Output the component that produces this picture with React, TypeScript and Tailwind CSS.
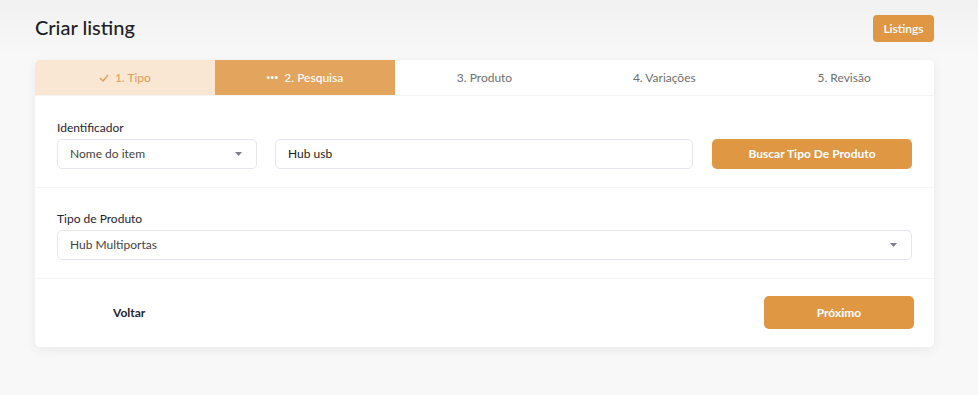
import React from "react";

const steps = [
  { label: "1. Tipo", state: "done" },
  { label: "2. Pesquisa", state: "active" },
  { label: "3. Produto", state: "todo" },
  { label: "4. Variações", state: "todo" },
  { label: "5. Revisão", state: "todo" },
];

const Caret = () => (
  <svg width="7" height="4" viewBox="0 0 7 4" className="shrink-0">
    <path d="M0 0h7L3.5 4z" fill="#7b7f88" />
  </svg>
);

const App: React.FC = () => {
  return (
    <div
      className="min-h-[395px] w-full bg-[linear-gradient(to_bottom,#f1f1f1,#f8f8f8_60px)] pt-[15px] pr-[44px] pl-[35px] text-[#1f2430]"
      style={{ fontFamily: "Lato, 'Noto Sans', sans-serif" }}
    >
      {/* Header */}
      <div className="flex items-start justify-between">
        <h1 className="mt-[-1px] text-[20px] leading-[26px] font-medium text-[#1b1f2a]">Criar listing</h1>
        <button className="h-[27px] w-[61px] rounded-[4px] bg-[#e09744] text-[12px] font-semibold text-white">
          Listings
        </button>
      </div>

      {/* Card */}
      <div className="mt-[18px] overflow-hidden rounded-[5px] bg-white shadow-[0_3px_12px_rgba(0,0,0,0.06)]">
        {/* Steps */}
        <div className="grid h-[36px] grid-cols-5 border-b border-[#f4f4f4] text-[12px]">
          {steps.map((s) => (
            <div
              key={s.label}
              className={
                s.state === "done"
                  ? "flex items-center justify-center gap-[6px] bg-[#f9e6d3] text-[#e29c55]"
                  : s.state === "active"
                    ? "flex items-center justify-center gap-[6px] bg-[#e3a55d] font-medium text-white"
                    : "flex items-center justify-center text-[#6f6f6f]"
              }
            >
              {s.state === "done" && (
                <svg width="10" height="8" viewBox="0 0 10 8">
                  <path d="M1 4l3 3 5-6" fill="none" stroke="#e29c55" strokeWidth="1.3" />
                </svg>
              )}
              {s.state === "active" && <span className="text-[7px] tracking-[0px]">•••</span>}
              <span>{s.label}</span>
            </div>
          ))}
        </div>

        {/* Identificador */}
        <div className="border-b border-[#f6f6f6] px-[22px] pt-[24px] pb-[18px]">
          <div className="mb-[3px] text-[12px] leading-[16px] text-[#1f2430]">Identificador</div>
          <div className="flex items-center gap-[18px]">
            <div className="flex h-[30px] w-[200px] items-center justify-between rounded-[5px] border border-[#e3e6ef] pr-[14px] pl-[12px] text-[12px] text-[#444]">
              <span>Nome do item</span>
              <Caret />
            </div>
            <div className="flex h-[30px] flex-1 items-center rounded-[5px] border border-[#e3e6ef] px-[12px] text-[12px] text-[#222]">
              Hub usb
            </div>
            <button className="ml-[1px] h-[30px] w-[200px] rounded-[5px] bg-[#e09744] text-[12px] font-bold text-white">
              Buscar Tipo De Produto
            </button>
          </div>
        </div>

        {/* Tipo de Produto */}
        <div className="border-b border-[#f6f6f6] px-[22px] pt-[23px] pb-[18px]">
          <div className="mb-[3px] text-[12px] leading-[16px] text-[#1f2430]">Tipo de Produto</div>
          <div className="flex h-[30px] items-center justify-between rounded-[5px] border border-[#e3e6ef] pr-[14px] pl-[12px] text-[12px] text-[#444]">
            <span>Hub Multiportas</span>
            <Caret />
          </div>
        </div>

        {/* Footer */}
        <div className="flex items-center justify-between pt-[17px] pr-[20px] pb-[18px] pl-[78px]">
          <span className="text-[12px] font-bold text-[#1f2430]">Voltar</span>
          <button className="h-[33px] w-[150px] rounded-[5px] bg-[#e09744] text-[12px] font-bold text-white">
            Próximo
          </button>
        </div>
      </div>
    </div>
  );
};

export default App;
